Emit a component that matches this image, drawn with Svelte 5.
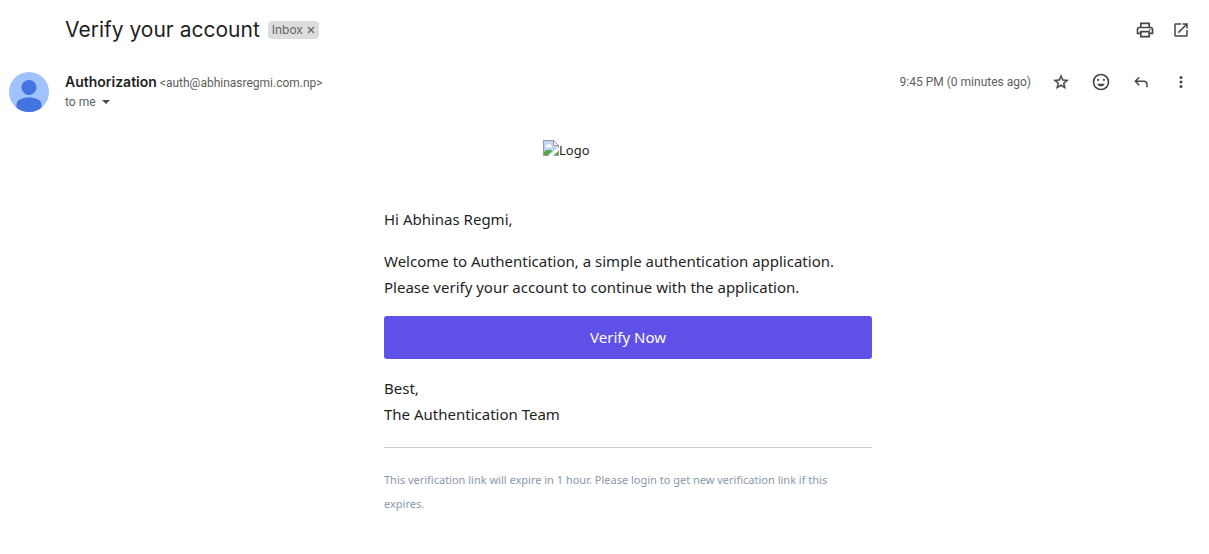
<script>
  let subject = 'Verify your account';
  let starred = $state(false);
  let labelled = $state(true);
</script>

<main class="thread">
  <header class="subject">
    <h1>{subject}</h1>
    {#if labelled}
      <span class="label">
        Inbox
        <button class="remove" aria-label="Remove label Inbox" onclick={() => (labelled = false)}>
          <svg viewBox="0 0 8 8" width="8" height="8"><path d="M1 1l6 6M7 1L1 7" stroke="#666" stroke-width="1.2" fill="none" /></svg>
        </button>
      </span>
    {/if}
    <div class="tools">
      <button class="icon" aria-label="Print all">
        <svg viewBox="0 0 24 24" width="20" height="20"><path d="M19 8h-1V3H6v5H5c-1.66 0-3 1.34-3 3v6h4v4h12v-4h4v-6c0-1.66-1.34-3-3-3zM8 5h8v3H8V5zm8 14H8v-4h8v4zm2-4v-2H6v2H4v-4c0-.55.45-1 1-1h14c.55 0 1 .45 1 1v4h-2z" /><circle cx="18" cy="11.5" r="1" /></svg>
      </button>
      <button class="icon" aria-label="In new window">
        <svg viewBox="0 0 24 24" width="18" height="18"><path d="M19 19H5V5h7V3H5c-1.11 0-2 .9-2 2v14c0 1.1.89 2 2 2h14c1.1 0 2-.9 2-2v-7h-2v7zM14 3v2h3.59l-9.83 9.83 1.41 1.41L19 6.41V10h2V3h-7z" /></svg>
      </button>
    </div>
  </header>

  <section class="sender">
    <svg class="avatar" viewBox="0 0 40 40" width="40" height="40" role="img" aria-label="Authorization">
      <clipPath id="disc"><circle cx="20" cy="20" r="20" /></clipPath>
      <g clip-path="url(#disc)">
        <rect width="40" height="40" fill="#a0c2ff" />
        <circle cx="20" cy="15.5" r="7.5" fill="#4374e0" />
        <path d="M7.5 40v-7.5c0-4.500 6-7 12.500-7s12.500 2.500 12.500 7V40z" fill="#4374e0" />
      </g>
    </svg>
    <div class="who">
      <div class="from"><strong>Authorization</strong> <span>&lt;auth@abhinasregmi.com.np&gt;</span></div>
      <button class="to">to me <svg viewBox="0 0 8 4" width="8" height="4"><path d="M0 0h8L4 4z" /></svg></button>
    </div>
    <time>9:45 PM (0 minutes ago)</time>
    <div class="tools">
      <button class="icon" aria-label="Star" aria-pressed={starred} onclick={() => (starred = !starred)}>
        <svg viewBox="0 0 24 24" width="18" height="18"><path stroke="#444746" stroke-width=".5" d="M22 9.240l-7.190-.62L12 2 9.190 8.630 2 9.240l5.460 4.730L5.820 21 12 17.270 18.180 21l-1.630-7.030L22 9.240zM12 15.400l-3.760 2.270 1-4.280-3.320-2.880 4.380-.38L12 6.100l1.710 4.040 4.380.38-3.320 2.880 1 4.280L12 15.400z" /></svg>
      </button>
      <button class="icon" aria-label="Add reaction">
        <svg viewBox="0 0 24 24" width="20" height="20"><path d="M12 2a10 10 0 1 0 0 20 10 10 0 0 0 0-20zm0 18a8 8 0 1 1 0-16 8 8 0 0 1 0 16z" /><circle cx="8.500" cy="9.500" r="1.300" /><circle cx="15.500" cy="9.500" r="1.300" /><path d="M7.500 14h9c-.7 2-2.300 3.200-4.500 3.200S8.200 16 7.500 14z" /></svg>
      </button>
      <button class="icon" aria-label="Reply">
        <svg viewBox="0 0 24 24" width="18" height="18"><path d="M19 19v-4c0-1.650-1.350-3-3-3H6.830l3.580 3.590L9 17l-6-6 6-6 1.410 1.410L6.830 10H16c2.760 0 5 2.240 5 5v4h-2z" /></svg>
      </button>
      <button class="icon" aria-label="More">
        <svg viewBox="0 0 24 24" width="18" height="18"><circle cx="12" cy="6" r="2" /><circle cx="12" cy="12" r="2" /><circle cx="12" cy="18" r="2" /></svg>
      </button>
    </div>
  </section>

  <article class="body">
    <div class="logo">
      <svg viewBox="0 0 16 16" width="16" height="16" aria-hidden="true">
        <path d="M.5.5h10l5 5v10H.5z" fill="#c0d5f8" stroke="#9a9a9a" />
        <path d="M10.500.5v5h5z" fill="#fff" stroke="#9a9a9a" />
        <path d="M3 7.500a1.500 1.500 0 0 1 1-2.500 2 2 0 0 1 3.500 0 1.300 1.300 0 0 1 .5 2.500z" fill="#fff" />
        <path d="M1 15v-3C3 9.500 6.500 9 9.500 11L5 15z" fill="#55a845" />
        <path d="M11 15l4-4v4z" fill="#55a845" />
        <path d="M5 16L16 7v3l-6 6z" fill="#fff" />
      </svg>
      <span>Logo</span>
    </div>
    <p>Hi Abhinas Regmi,</p>
    <p>Welcome to Authentication, a simple authentication application. Please verify your account to continue with the application.</p>
    <a class="verify" href="#verify">Verify Now</a>
    <p>Best,<br />The Authentication Team</p>
    <hr />
    <p class="note">This verification link will expire in 1 hour. Please login to get new verification link if this<br />expires.</p>
  </article>
</main>

<style>
  :global(body) {
    margin: 0;
    background: #fff;
  }
  .thread {
    padding: 10px 18px 24px 9px;
    font-family: 'Noto Sans', sans-serif;
    color: #1f1f1f;
  }
  button {
    border: 0;
    padding: 0;
    background: none;
    font: inherit;
    color: inherit;
    cursor: pointer;
  }
  svg {
    display: block;
  }
  .subject {
    display: flex;
    align-items: center;
    gap: 8px;
    height: 40px;
    padding-left: 56px;
  }
  h1 {
    margin: 0;
    font: 400 21px/28px Inter, sans-serif;
  }
  .label {
    display: flex;
    align-items: center;
    gap: 4px;
    height: 18px;
    padding: 0 4px;
    border-radius: 4px;
    background: #ddd;
    color: #666;
    font: 12px/18px Inter, sans-serif;
  }
  .tools {
    display: flex;
    gap: 20px;
  }
  .subject .tools {
    gap: 16px;
    margin-left: auto;
  }
  .icon {
    display: grid;
    place-items: center;
    width: 20px;
    height: 20px;
    fill: #444746;
  }
  .sender {
    display: flex;
    align-items: flex-start;
    padding-top: 22px;
    font: 12px/20px Roboto, sans-serif;
    color: #5e5e5e;
  }
  .who {
    flex: 1;
    padding-left: 16px;
  }
  .from strong {
    font: 600 14px/20px Inter, sans-serif;
    color: #1f1f1f;
  }
  .to {
    display: flex;
    align-items: center;
    gap: 6px;
    line-height: 18px;
    fill: #444746;
  }
  time {
    margin-right: 20px;
  }
  .body {
    max-width: 488px;
    margin: 28px auto 0;
    padding-left: 56px;
    font-size: 15px;
    line-height: 26px;
  }
  .logo {
    display: flex;
    width: 170px;
    height: 50px;
    margin: 0 auto;
    font-size: 13px;
    line-height: 21px;
  }
  p {
    margin: 16px 0;
  }
  .verify {
    display: block;
    border-radius: 3px;
    background: #5f51e8;
    color: #fff;
    line-height: 43px;
    text-align: center;
    text-decoration: none;
  }
  hr {
    margin: 20px 0;
    border: 0;
    border-top: 1px solid #ccc;
  }
  .note {
    margin: 0;
    color: #8898aa;
    font-size: 11px;
    line-height: 24px;
  }
</style>
